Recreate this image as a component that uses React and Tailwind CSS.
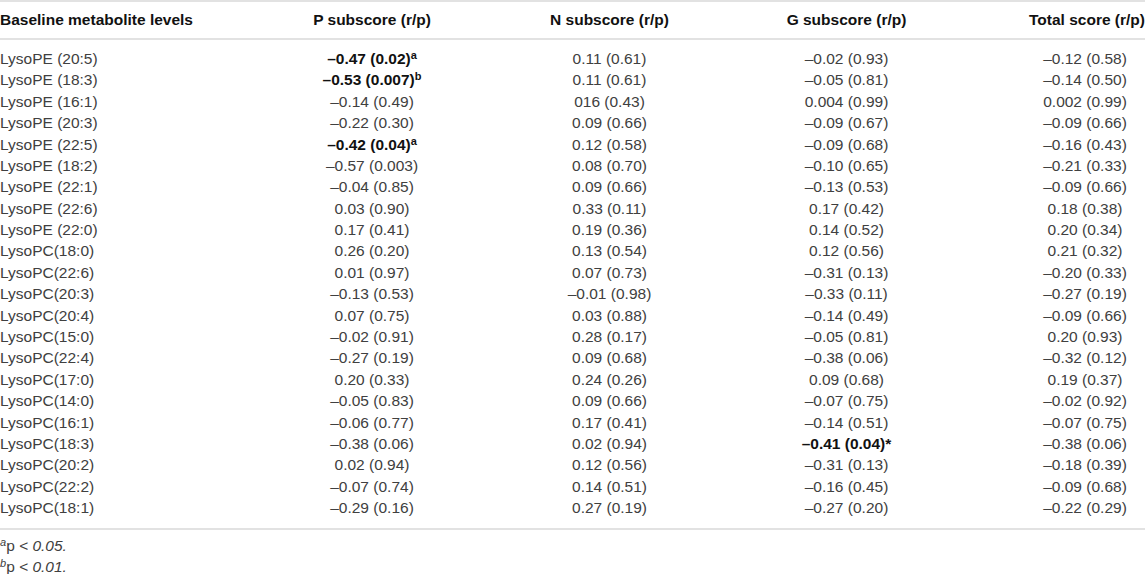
import React from 'react';

const rows = [
  ['LysoPE (20:5)', ['–0.47 (0.02)', 'a'], '0.11 (0.61)', '–0.02 (0.93)', '–0.12 (0.58)'],
  ['LysoPE (18:3)', ['–0.53 (0.007)', 'b'], '0.11 (0.61)', '–0.05 (0.81)', '–0.14 (0.50)'],
  ['LysoPE (16:1)', '–0.14 (0.49)', '016 (0.43)', '0.004 (0.99)', '0.002 (0.99)'],
  ['LysoPE (20:3)', '–0.22 (0.30)', '0.09 (0.66)', '–0.09 (0.67)', '–0.09 (0.66)'],
  ['LysoPE (22:5)', ['–0.42 (0.04)', 'a'], '0.12 (0.58)', '–0.09 (0.68)', '–0.16 (0.43)'],
  ['LysoPE (18:2)', '–0.57 (0.003)', '0.08 (0.70)', '–0.10 (0.65)', '–0.21 (0.33)'],
  ['LysoPE (22:1)', '–0.04 (0.85)', '0.09 (0.66)', '–0.13 (0.53)', '–0.09 (0.66)'],
  ['LysoPE (22:6)', '0.03 (0.90)', '0.33 (0.11)', '0.17 (0.42)', '0.18 (0.38)'],
  ['LysoPE (22:0)', '0.17 (0.41)', '0.19 (0.36)', '0.14 (0.52)', '0.20 (0.34)'],
  ['LysoPC(18:0)', '0.26 (0.20)', '0.13 (0.54)', '0.12 (0.56)', '0.21 (0.32)'],
  ['LysoPC(22:6)', '0.01 (0.97)', '0.07 (0.73)', '–0.31 (0.13)', '–0.20 (0.33)'],
  ['LysoPC(20:3)', '–0.13 (0.53)', '–0.01 (0.98)', '–0.33 (0.11)', '–0.27 (0.19)'],
  ['LysoPC(20:4)', '0.07 (0.75)', '0.03 (0.88)', '–0.14 (0.49)', '–0.09 (0.66)'],
  ['LysoPC(15:0)', '–0.02 (0.91)', '0.28 (0.17)', '–0.05 (0.81)', '0.20 (0.93)'],
  ['LysoPC(22:4)', '–0.27 (0.19)', '0.09 (0.68)', '–0.38 (0.06)', '–0.32 (0.12)'],
  ['LysoPC(17:0)', '0.20 (0.33)', '0.24 (0.26)', '0.09 (0.68)', '0.19 (0.37)'],
  ['LysoPC(14:0)', '–0.05 (0.83)', '0.09 (0.66)', '–0.07 (0.75)', '–0.02 (0.92)'],
  ['LysoPC(16:1)', '–0.06 (0.77)', '0.17 (0.41)', '–0.14 (0.51)', '–0.07 (0.75)'],
  ['LysoPC(18:3)', '–0.38 (0.06)', '0.02 (0.94)', ['–0.41 (0.04)', '*'], '–0.38 (0.06)'],
  ['LysoPC(20:2)', '0.02 (0.94)', '0.12 (0.56)', '–0.31 (0.13)', '–0.18 (0.39)'],
  ['LysoPC(22:2)', '–0.07 (0.74)', '0.14 (0.51)', '–0.16 (0.45)', '–0.09 (0.68)'],
  ['LysoPC(18:1)', '–0.29 (0.16)', '0.27 (0.19)', '–0.27 (0.20)', '–0.22 (0.29)'],
];

// bold cells are stored as [value, mark]
function Cell({ value }) {
  if (Array.isArray(value)) {
    const [text, mark] = value;
    return (
      <span className="font-bold text-[#111]">
        {text}
        {mark === '*' ? <span>*</span> : <span className="relative -top-[5px] text-[11px]">{mark}</span>}
      </span>
    );
  }
  return <span>{value}</span>;
}

export default function App() {
  return (
    <div className="w-[1145px] h-[574px] bg-white text-[15.5px] text-[#404040] font-['Liberation_Sans',Arial,sans-serif] overflow-hidden">
      {/* Header */}
      <div className="grid grid-cols-[253px_238px_237px_237px_1fr] h-[40px] items-center border-t-2 border-b-2 border-[#e2e2e2] font-bold text-[#111]">
        <div>Baseline metabolite levels</div>
        <div className="text-center">P subscore (r/p)</div>
        <div className="text-center">N subscore (r/p)</div>
        <div className="text-center">G subscore (r/p)</div>
        <div className="text-right whitespace-nowrap">Total score (r/p)</div>
      </div>

      {/* Body */}
      <div className="pt-[8px] pb-[9px] border-b-2 border-[#e2e2e2]">
        {rows.map((r) => (
          <div key={r[0]} className="grid grid-cols-[253px_238px_237px_237px_1fr] h-[21.4px] items-center leading-none">
            <div>{r[0]}</div>
            <div className="text-center"><Cell value={r[1]} /></div>
            <div className="text-center"><Cell value={r[2]} /></div>
            <div className="text-center"><Cell value={r[3]} /></div>
            <div className="text-center pl-[60px]"><Cell value={r[4]} /></div>
          </div>
        ))}
      </div>

      {/* Footnotes */}
      <div className="pt-[6px] leading-[20px]">
        <div><span className="relative -top-[5px] italic text-[11px]">a</span>p <span className="italic">&lt; 0.05.</span></div>
        <div><span className="relative -top-[5px] italic text-[11px]">b</span>p <span className="italic">&lt; 0.01.</span></div>
      </div>
    </div>
  );
}
